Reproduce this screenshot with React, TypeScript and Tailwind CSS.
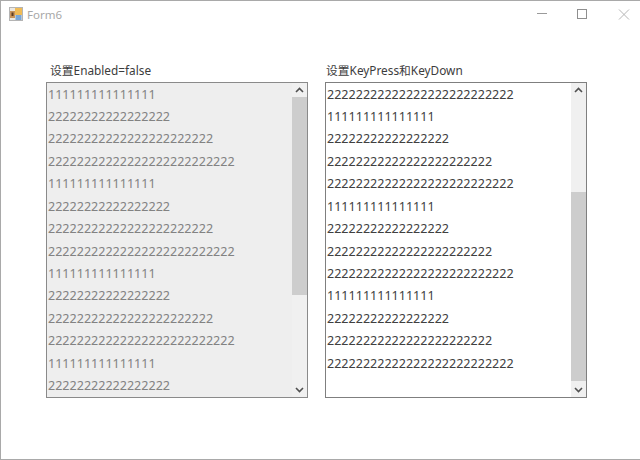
const ONES = "111111111111111";
const TWOS_S = "22222222222222222";
const TWOS_M = "22222222222222222222222";
const TWOS_L = "22222222222222222222222222";

const LEFT_ROWS = [ONES, TWOS_S, TWOS_M, TWOS_L, ONES, TWOS_S, TWOS_M, TWOS_L, ONES, TWOS_S, TWOS_M, TWOS_L, ONES, TWOS_S];
const RIGHT_ROWS = [TWOS_L, ONES, TWOS_S, TWOS_M, TWOS_L, ONES, TWOS_S, TWOS_M, TWOS_L, ONES, TWOS_S, TWOS_M, TWOS_L];

function FormIcon() {
  return (
    <svg width="14" height="14" viewBox="0 0 14 14" className="shrink-0">
      <rect x="0.5" y="0.5" width="13" height="13" fill="#ece8e0" stroke="#b4b4b4" />
      <rect x="1" y="4" width="5" height="7" fill="#c8935a" />
      <rect x="2.5" y="5.5" width="2" height="3.5" fill="#5c3c22" />
      <rect x="6" y="1" width="7" height="7" fill="#f0bb55" />
      <rect x="6.5" y="8" width="6" height="5" fill="#7aa6d6" />
    </svg>
  );
}

function ListPanel({
  label,
  labelPad,
  rows,
  disabled,
  thumbTop,
  thumbHeight,
}: {
  label: string;
  labelPad: string;
  rows: string[];
  disabled?: boolean;
  thumbTop: string;
  thumbHeight: string;
}) {
  return (
    <div className="flex w-[262px] flex-col">
      <div className={`h-[20px] ${labelPad} text-[11.8px] leading-[17px] text-[#3c3c3c]`}>{label}</div>
      <div
        className={
          disabled
            ? "flex h-[316px] border border-[#8a8a8a] bg-[#eeeeee] text-[#828282]"
            : "flex h-[316px] border border-[#7f7f7f] bg-white text-[#404040]"
        }
      >
        <div className="min-w-0 flex-1 overflow-hidden pl-[1px] pt-[0.5px]">
          {rows.map((row, i) => (
            <div key={i} className="h-[22.45px] whitespace-nowrap text-[12.55px] leading-[22.45px]">
              {row}
            </div>
          ))}
        </div>
        <div className="flex w-[15px] shrink-0 flex-col items-center bg-[#f0f0f0]">
          <svg width="15" height="14" viewBox="0 0 15 14" className="shrink-0">
            <path d="M4 9 L7.5 5.5 L11 9" fill="none" stroke="#505050" strokeWidth="1.6" />
          </svg>
          <div className="w-full flex-1">
            <div className={thumbTop} />
            <div className={`${thumbHeight} w-full bg-[#cdcdcd]`} />
          </div>
          <svg width="15" height="14" viewBox="0 0 15 14" className="shrink-0">
            <path d="M4 5 L7.5 8.5 L11 5" fill="none" stroke="#505050" strokeWidth="1.6" />
          </svg>
        </div>
      </div>
    </div>
  );
}

export default function App() {
  return (
    <div className="flex h-[460px] w-[640px] flex-col bg-white font-['Noto_Sans','Noto_Sans_CJK_SC',sans-serif]">
      <div className="flex h-[460px] flex-col border border-[#a9a9a9] border-r-0">
        <div className="flex h-[26px] shrink-0 items-center justify-between pl-[8px]">
          <div className="flex items-center gap-[4px]">
            <FormIcon />
            <span className="pt-[1px] text-[11.5px] text-[#a8a8a8]">Form6</span>
          </div>
          <div className="flex items-center pr-[10px]">
            <svg width="10" height="10" viewBox="0 0 10 10">
              <path d="M0 4.5 H10" stroke="#9a9a9a" strokeWidth="1" />
            </svg>
            <svg width="10" height="10" viewBox="0 0 10 10" className="ml-[30px]">
              <rect x="0.5" y="0.5" width="9" height="9" fill="none" stroke="#8f8f8f" />
            </svg>
            <svg width="12" height="11" viewBox="0 0 12 11" className="ml-[31px]">
              <path d="M1 0.5 L11 10.5 M11 0.5 L1 10.5" stroke="#b5b5b5" strokeWidth="1" />
            </svg>
          </div>
        </div>
        <div className="flex gap-[17px] pl-[45px] pt-[35px]">
          <ListPanel
            label="设置Enabled=false"
            labelPad="pl-[4px]"
            rows={LEFT_ROWS}
            disabled
            thumbTop="h-0"
            thumbHeight="h-[198px]"
          />
          <ListPanel
            label="设置KeyPress和KeyDown"
            labelPad="pl-[1px]"
            rows={RIGHT_ROWS}
            thumbTop="h-[95px]"
            thumbHeight="h-[189px]"
          />
        </div>
      </div>
    </div>
  );
}
